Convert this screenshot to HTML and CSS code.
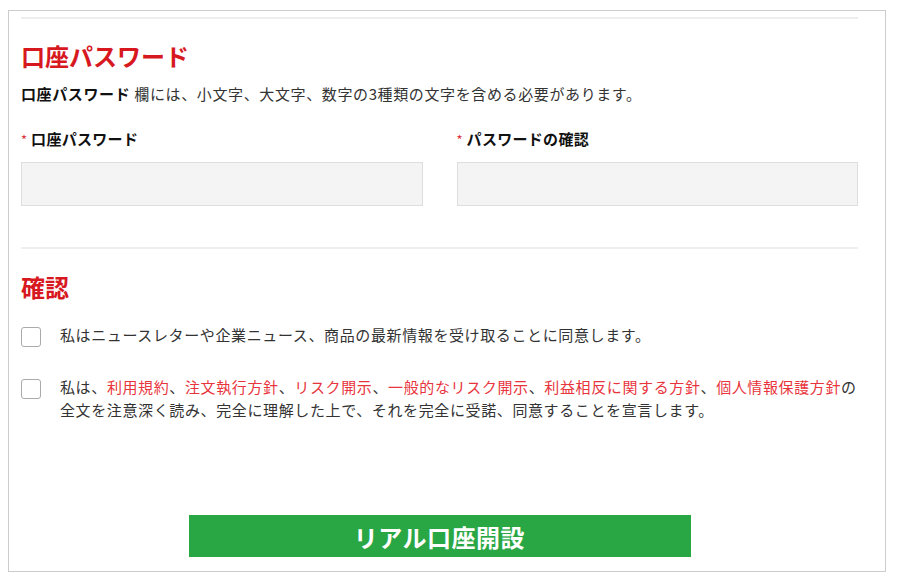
FILE: index.html
```html
<!DOCTYPE html>
<html lang="ja">
<head>
  <meta charset="UTF-8">
  <meta name="viewport" content="width=device-width, initial-scale=1.0">
  <title>口座開設</title>
  <link rel="stylesheet" href="styles.css">
</head>
<body>
  <div class="panel">
    <div class="sep"></div>
    <h2 class="section-title">口座パスワード</h2>
    <p class="desc"><b>口座パスワード</b> 欄には、小文字、大文字、数字の3種類の文字を含める必要があります。</p>

    <div class="fields">
      <div class="field">
        <label class="label"><span class="req">*</span> 口座パスワード</label>
        <input class="input" type="password">
      </div>
      <div class="field">
        <label class="label"><span class="req">*</span> パスワードの確認</label>
        <input class="input" type="password">
      </div>
    </div>

    <div class="sep sep-2"></div>
    <h2 class="section-title title-2">確認</h2>

    <div class="agree first">
      <span class="check"></span>
      <p>私はニュースレターや企業ニュース、商品の最新情報を受け取ることに同意します。</p>
    </div>
    <div class="agree">
      <span class="check"></span>
      <p>私は、<a href="#">利用規約</a>、<a href="#">注文執行方針</a>、<a href="#">リスク開示</a>、<a href="#">一般的なリスク開示</a>、<a href="#">利益相反に関する方針</a>、<a href="#">個人情報保護方針</a>の全文を注意深く読み、完全に理解した上で、それを完全に受諾、同意することを宣言します。</p>
    </div>

    <div class="actions">
      <button class="submit">リアル口座開設</button>
    </div>
  </div>
</body>
</html>
```

FILE: styles.css
```css
* { box-sizing: border-box; }
body {
  margin: 10px 15px 0 8px;
  background: #fff;
  color: #333;
  font-family: "Noto Sans CJK JP", "Noto Sans", sans-serif;
  font-size: 15px;
  letter-spacing: 0.62px;
}
.panel {
  border: 1px solid #ccc;
  padding: 6px 27px 14px 12px;
}
.sep { height: 2px; background: #eee; }
.sep-2 { margin-top: 41px; }

.section-title {
  margin: 21px 0 0;
  font-size: 24px;
  line-height: 32px;
  font-weight: 700;
  color: #d7191f;
  letter-spacing: 0;
}
.title-2 { margin-top: 22px; }

.desc { margin: 11px 0 0; line-height: 22px; }
.desc b { color: #111; }

.fields {
  display: grid;
  grid-template-columns: 1fr 1fr;
  gap: 34px;
  margin-top: 23px;
}
.label {
  display: block;
  line-height: 22px;
  font-weight: 700;
  color: #111;
  letter-spacing: 0.3px;
}
.req { color: #e0333a; font-weight: 400; font-size: 13px; }
.input {
  display: block;
  width: 100%;
  height: 44px;
  margin-top: 11px;
  background: #f4f4f4;
  border: 1px solid #ddd;
  border-radius: 0;
  outline: none;
}

.agree {
  display: flex;
  align-items: flex-start;
  gap: 19px;
  margin-top: 28px;
}
.agree.first { margin-top: 20px; }
.agree p { margin: 0; line-height: 23px; flex: 1; }
.agree a { color: #e8353d; text-decoration: none; }
.check {
  flex: none;
  width: 20px;
  height: 20px;
  margin-top: 4px;
  border: 1.5px solid #aaa;
  border-radius: 3px;
  background: #fff;
}

.actions {
  display: flex;
  justify-content: center;
  margin-top: 94px;
}
.submit {
  width: 502px;
  height: 42px;
  border: none;
  background: #2aa745;
  color: #fff;
  font-family: inherit;
  font-size: 24px;
  font-weight: 700;
  letter-spacing: 0.5px;
  cursor: pointer;
}
```
